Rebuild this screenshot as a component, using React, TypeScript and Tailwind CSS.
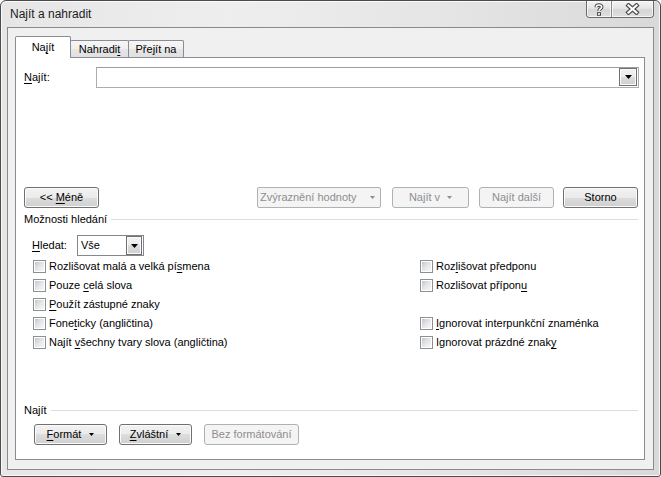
import React from "react";

const U = ({ c }: { c: string }) => (
  <span className="underline decoration-1 underline-offset-[2px]">{c}</span>
);

function Tri({ color = "#000", w = 7 }: { color?: string; w?: number }) {
  const h = Math.ceil(w / 2);
  return (
    <svg width={w} height={h} viewBox={`0 0 ${w} ${h}`} className="block">
      <polygon points={`0,0 ${w},0 ${w / 2},${h}`} fill={color} />
    </svg>
  );
}

function Btn({
  children,
  className = "",
  disabled = false,
}: {
  children: React.ReactNode;
  className?: string;
  disabled?: boolean;
}) {
  return (
    <div
      className={
        "h-[21px] flex items-center justify-center rounded-[3px] border leading-[13px] " +
        (disabled
          ? "border-[#adb2b5] bg-[#f4f4f4] text-[#8e8e8e] "
          : "border-[#707070] bg-[linear-gradient(#f2f2f2_0%,#ebebeb_50%,#dddddd_50%,#cfcfcf_100%)] shadow-[inset_0_0_0_1px_#fbfbfb] text-black ") +
        className
      }
    >
      {children}
    </div>
  );
}

function DropBtn({ className = "" }: { className?: string }) {
  return (
    <div
      className={
        "flex items-center justify-center border border-[#707070] bg-[linear-gradient(#f2f2f2_0%,#ebebeb_50%,#dddddd_50%,#cfcfcf_100%)] shadow-[inset_0_0_0_1px_#fbfbfb] " +
        className
      }
    >
      <Tri w={7} />
    </div>
  );
}

function Check({ children }: { children: React.ReactNode }) {
  return (
    <div className="h-[19px] flex items-center">
      <div className="w-[13px] h-[13px] border border-[#8e8f8f] bg-white p-px shrink-0">
        <div className="w-full h-full bg-[linear-gradient(135deg,#c3c7cd_0%,#e4e6e9_50%,#f7f7f7_100%)]" />
      </div>
      <span className="ml-[3px] leading-[13px] whitespace-nowrap">{children}</span>
    </div>
  );
}

export default function App() {
  return (
    <div className="w-[661px] h-[477px] font-['Liberation_Sans',Arial,sans-serif] text-[11px] text-black bg-white">
      <div className="w-[661px] h-[477px] flex flex-col border border-[#4b4b4b] rounded-t-[6px] rounded-b-[3px] bg-[linear-gradient(90deg,#e6e6e6_0%,#eeeeee_35%,#e4e4e4_70%,#d9d9d9_100%)] shadow-[inset_0_0_0_1px_rgba(255,255,255,0.8)]">
        {/* Title bar */}
        <div className="h-[26px] flex items-start justify-between shrink-0">
          <div className="pl-[9px] pt-[6px] text-[12px] leading-[14px] text-[#1b1b1b]">
            Najít a nahradit
          </div>
          <div className="mr-[6px] flex h-[17px] border border-t-0 border-[#6b6b6b] rounded-b-[4px] overflow-hidden bg-[linear-gradient(#f3f3f3_0%,#e6e6e6_45%,#d6d6d6_55%,#e0e0e0_100%)]">
            <div className="w-[25px] h-full flex items-center justify-center border-r border-[#8a8a8a] shadow-[inset_0_0_0_1px_rgba(255,255,255,0.7)]">
              <svg width="10" height="13" viewBox="0 0 10 13" className="block">
                <path
                  d="M2.3 4.2 C2.3 1.4 7.7 1.4 7.7 4 C7.7 5.8 5 6 5 7.8"
                  stroke="#4a4a4a"
                  strokeWidth="3.6"
                  fill="none"
                />
                <rect x="3" y="9.2" width="4" height="3.6" fill="#4a4a4a" />
                <path
                  d="M2.3 4.2 C2.3 1.4 7.7 1.4 7.7 4 C7.7 5.8 5 6 5 7.8"
                  stroke="#ffffff"
                  strokeWidth="1.6"
                  fill="none"
                />
                <rect x="4" y="10.2" width="2" height="1.6" fill="#ffffff" />
              </svg>
            </div>
            <div className="w-[41px] h-full flex items-center justify-center shadow-[inset_0_0_0_1px_rgba(255,255,255,0.7)]">
              <svg width="15" height="12" viewBox="0 0 15 12" className="block">
                <path
                  d="M3.5 2.5 L11.5 9.5 M11.5 2.5 L3.5 9.5"
                  stroke="#4a4a4a"
                  strokeWidth="4.4"
                  strokeLinecap="square"
                />
                <path
                  d="M3.5 2.5 L11.5 9.5 M11.5 2.5 L3.5 9.5"
                  stroke="#ffffff"
                  strokeWidth="2.2"
                  strokeLinecap="square"
                />
              </svg>
            </div>
          </div>
        </div>

        {/* Client area */}
        <div className="ml-[6px] w-[647px] h-[443px] border border-[#8a8a8a] bg-[#f0f0f0] flex flex-col shrink-0">
          {/* Tabs */}
          <div className="pt-[8px] pl-[7px] flex items-end">
            <div className="relative z-10 -mb-px w-[56px] h-[22px] bg-white border border-b-0 border-[#898c95] rounded-t-[2px] flex items-center justify-center leading-[13px]">
              Na<U c="j" />ít
            </div>
            <div className="-ml-px w-[59px] h-[17px] border border-b-0 border-[#898c95] rounded-t-[2px] bg-[linear-gradient(#f6f6f6_0%,#efefef_50%,#e6e6e6_50%,#e0e0e0_100%)] flex items-center justify-center leading-[13px]">
              Nahradi<U c="t" />
            </div>
            <div className="-ml-px w-[56px] h-[17px] border border-b-0 border-[#898c95] rounded-t-[2px] bg-[linear-gradient(#f6f6f6_0%,#efefef_50%,#e6e6e6_50%,#e0e0e0_100%)] flex items-center justify-center leading-[13px]">
              Pře<U c="j" />ít na
            </div>
          </div>

          {/* Panel */}
          <div className="ml-[7px] w-[630px] h-[403px] border border-[#898c95] bg-white flex flex-col pl-[8px] pr-[6px]">
            {/* Find row */}
            <div className="mt-[9px] h-[21px] flex items-center">
              <div className="w-[72px] leading-[13px]">
                <U c="N" />ajít:
              </div>
              <div className="flex-1 -mr-px h-[21px] border border-[#abadb3] border-t-[#9a9da3] bg-white flex items-start justify-end pr-px">
                <DropBtn className="w-[18px] h-[18px]" />
              </div>
            </div>

            {/* Buttons row */}
            <div className="mt-[99px] h-[21px] flex items-center">
              <Btn className="w-[75px]">
                &lt;&lt;&nbsp;<U c="M" />éně
              </Btn>
              <div className="ml-auto flex items-center">
                <div className="w-[124px] h-[21px] rounded-[2px] border border-[#adb2b5] bg-[#f4f4f4] text-[#8e8e8e] flex items-center pl-[2px] pr-[5px] leading-[13px]">
                  <span className="flex-1 whitespace-nowrap">Zvýraznění hodnoty</span>
                  <Tri color="#8e8e8e" w={5} />
                </div>
                <Btn disabled className="ml-[11px] w-[77px]">
                  <span>Najít v</span>
                  <span className="ml-[7px]">
                    <Tri color="#8e8e8e" w={5} />
                  </span>
                </Btn>
                <Btn disabled className="ml-[10px] w-[75px]">
                  Najít další
                </Btn>
                <Btn className="ml-[9px] w-[75px]">Storno</Btn>
              </div>
            </div>

            {/* Search options header */}
            <div className="mt-[4px] h-[14px] flex items-center">
              <span className="leading-[14px] whitespace-nowrap">Možnosti hledání</span>
              <div className="ml-[4px] flex-1 h-px bg-[#d5dfe5]" />
            </div>

            {/* Hledat row */}
            <div className="mt-[9px] h-[21px] flex items-center pl-[8px]">
              <div className="w-[45px] leading-[13px]">
                <U c="H" />ledat:
              </div>
              <div className="w-[67px] h-[21px] border border-[#828790] bg-white flex items-center pr-px">
                <span className="flex-1 pl-[3px] leading-[13px]">Vše</span>
                <DropBtn className="w-[16px] h-[19px] border-[#505050]" />
              </div>
            </div>

            {/* Checkbox grid */}
            <div className="mt-[1px] pl-[9px] grid grid-cols-[387px_1fr]">
              <Check>
                Rozlišovat malá a velká pí<U c="s" />mena
              </Check>
              <Check>
                Roz<U c="l" />išovat předponu
              </Check>
              <Check>
                Pouze <U c="c" />elá slova
              </Check>
              <Check>
                Rozlišovat přípon<U c="u" />
              </Check>
              <Check>
                <U c="P" />oužít zástupné znaky
              </Check>
              <div className="h-[19px]" />
              <Check>
                Fone<U c="t" />icky (angličtina)
              </Check>
              <Check>
                <U c="I" />gnorovat interpunkční znaménka
              </Check>
              <Check>
                Najít <U c="v" />šechny tvary slova (angličtina)
              </Check>
              <Check>
                Ignorovat prázdné znak<U c="y" />
              </Check>
            </div>

            {/* Bottom section */}
            <div className="mt-auto pb-[14px] flex flex-col">
              <div className="h-[14px] flex items-center">
                <span className="leading-[14px]">Najít</span>
                <div className="ml-[4px] flex-1 h-px bg-[#d5dfe5]" />
              </div>
              <div className="mt-[7px] h-[21px] pl-[10px] flex items-center">
                <Btn className="w-[73px]">
                  <span>
                    <U c="F" />ormát
                  </span>
                  <span className="ml-[8px]">
                    <Tri w={5} />
                  </span>
                </Btn>
                <Btn className="ml-[12px] w-[73px]">
                  <span>
                    <U c="Z" />vláštní
                  </span>
                  <span className="ml-[8px]">
                    <Tri w={5} />
                  </span>
                </Btn>
                <Btn disabled className="ml-[12px] w-[95px]">
                  Bez formátování
                </Btn>
              </div>
            </div>
          </div>
        </div>
      </div>
    </div>
  );
}
